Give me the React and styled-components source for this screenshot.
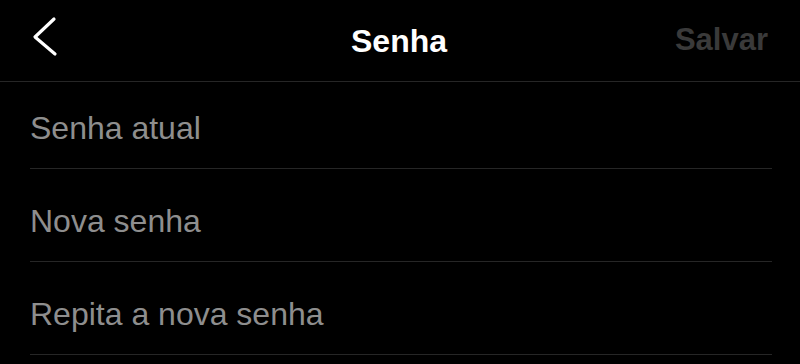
import styled, { createGlobalStyle } from 'styled-components';

const GlobalStyle = createGlobalStyle`
  html, body {
    margin: 0;
    padding: 0;
    background: #000;
  }
  body {
    font-family: "Liberation Sans", Arial, sans-serif;
    -webkit-font-smoothing: antialiased;
  }
`;

const Screen = styled.div`
  width: 800px;
  height: 364px;
  background: #000;
  overflow: hidden;
`;

const Header = styled.header`
  display: grid;
  grid-template-columns: 1fr auto 1fr;
  align-items: center;
  height: 81px;
  padding: 0 32px 0 30px;
  border-bottom: 1px solid #262626;
`;

const BackButton = styled.button`
  justify-self: start;
  align-self: start;
  margin-top: 15px;
  padding: 0;
  border: none;
  background: none;
  display: flex;
  cursor: pointer;
`;

const Title = styled.h1`
  margin: 0;
  font-size: 32px;
  line-height: 36px;
  font-weight: 700;
  color: #fff;
`;

const SaveButton = styled.button`
  justify-self: end;
  padding: 0;
  border: none;
  background: none;
  font-family: inherit;
  font-size: 31px;
  line-height: 36px;
  font-weight: 700;
  color: #3a3a3a;
  margin-top: -2px;
`;

const Form = styled.div`
  display: flex;
  flex-direction: column;
  margin: 0 28px 0 30px;
`;

const Field = styled.div`
  display: flex;
  align-items: flex-end;
  height: ${(p) => (p.$first ? '64px' : '70px')};
  padding-bottom: 22px;
  border-bottom: 1px solid #262626;
`;

const Placeholder = styled.span`
  font-size: 32px;
  line-height: 36px;
  color: #8e8e8e;
`;

function Chevron() {
  return (
    <svg width="28" height="44" viewBox="0 0 28 44" fill="none">
      <path
        d="M24 4 L5 22 L25 39"
        stroke="#fff"
        strokeWidth="3.2"
        strokeLinecap="round"
        strokeLinejoin="round"
      />
    </svg>
  );
}

const fields = ['Senha atual', 'Nova senha', 'Repita a nova senha'];

export default function App() {
  return (
    <Screen>
      <GlobalStyle />
      <Header>
        <BackButton aria-label="Voltar">
          <Chevron />
        </BackButton>
        <Title>Senha</Title>
        <SaveButton>Salvar</SaveButton>
      </Header>
      <Form>
        {fields.map((label, i) => (
          <Field key={label} $first={i === 0}>
            <Placeholder>{label}</Placeholder>
          </Field>
        ))}
      </Form>
    </Screen>
  );
}
